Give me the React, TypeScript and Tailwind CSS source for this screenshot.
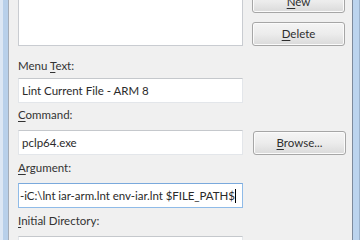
import React from "react";

const font = { fontFamily: 'Lato, "Noto Sans", sans-serif' };

function Btn({ u, rest, className = "" }: { u: string; rest: string; className?: string }) {
  return (
    <div
      className={
        "shrink-0 w-[93px] rounded-[3px] border border-[#a6a6a6] bg-gradient-to-b from-[#f5f5f5] via-[#ececec] to-[#dadada] flex items-center justify-center text-[11.5px] text-[#2e2e2e] shadow-[inset_0_0_0_1px_#fbfbfb] " +
        className
      }
    >
      <span>
        <span className="underline underline-offset-2">{u}</span>
        {rest}
      </span>
    </div>
  );
}

function Label({ u, rest, className = "" }: { u: string; rest: string; className?: string }) {
  return (
    <div className={"shrink-0 text-[11.5px] leading-[16px] text-[#333333] " + className}>
      <span className="underline underline-offset-2">{u}</span>
      {rest}
    </div>
  );
}

function Input({ children, focused = false }: { children?: React.ReactNode; focused?: boolean }) {
  return (
    <div
      className={
        "shrink-0 w-[225px] h-[25px] bg-white border flex items-center overflow-hidden whitespace-nowrap text-[11.5px] text-[#2a2a2a] " +
        (focused
          ? "border-[#8fbbe8] border-t-[#7aa9dc]"
          : "border-[#e3e6ea] border-t-[#c5c8cc]")
      }
    >
      {children}
    </div>
  );
}

export default function App() {
  return (
    <div className="w-[360px] h-[240px] overflow-hidden flex bg-[#f0f0f0]" style={font}>
      <div className="w-[3px] h-full bg-[#dce7f4]" />
      <div className="w-[5px] h-full bg-[#b8d0ea]" />
      <div className="w-[345px] h-full overflow-hidden border-l border-r border-l-[#a3acb8] border-r-[#7d8a9c] bg-[#f0f0f0] pl-[9px] pr-[7px] flex flex-col">
        <div className="shrink-0 flex gap-[9px] mt-[-10px]">
          <div className="w-[225px] h-[56px] bg-white border border-[#c9ccd1] border-t-[#b4b7bc]" />
          <div className="flex flex-col gap-[9px]">
            <Btn u="N" rest="ew" className="h-[23px]" />
            <Btn u="D" rest="elete" className="h-[24px]" />
          </div>
        </div>
        <div className="shrink-0 h-[32px] pt-[12px] text-[11.5px] leading-[16px] text-[#333333]">
          Menu <span className="underline underline-offset-2">T</span>ext:
        </div>
        <Input>
          <span className="pl-[3px]">Lint Current File - ARM 8</span>
        </Input>
        <Label u="C" rest="ommand:" className="h-[27px] pt-[4px]" />
        <div className="shrink-0 flex items-center gap-[10px]">
          <Input>
            <span className="pl-[3px]">pclp64.exe</span>
          </Input>
          <Btn u="B" rest="rowse..." className="w-[92px] h-[24px]" />
        </div>
        <Label u="A" rest="rgument:" className="h-[28px] pt-[5px]" />
        <Input focused>
          <span className="pl-[1px] tracking-[-0.05px]">-iC:\lnt iar-arm.lnt env-iar.lnt $FILE_PATH$</span>
          <span className="inline-block w-[1px] h-[14px] bg-black" />
        </Input>
        <Label u="I" rest="nitial Directory:" className="h-[28px] pt-[5px]" />
        <Input />
      </div>
      <div className="w-[6px] h-full bg-[#bcd4ee]" />
      <div className="w-[1px] h-full bg-[#9bb2cc]" />
    </div>
  );
}
